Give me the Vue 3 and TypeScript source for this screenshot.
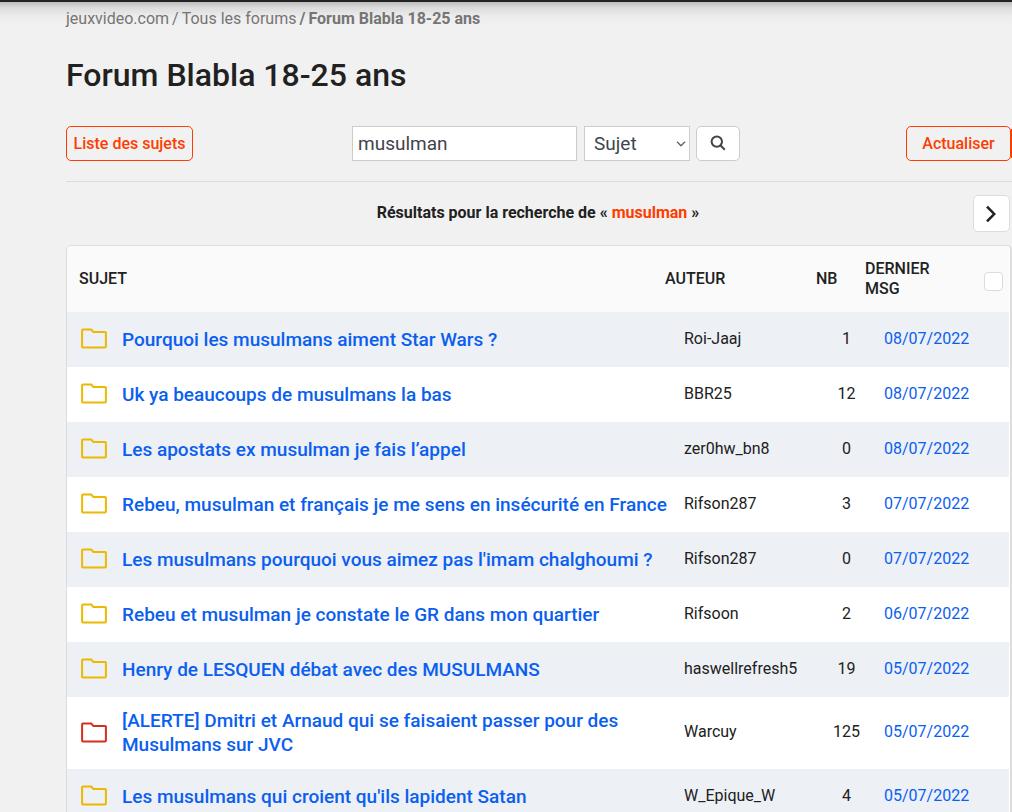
<script setup lang="ts">
import { ref } from 'vue'

interface Topic {
  title: string
  author: string
  count: number
  date: string
  hot?: boolean
}

const query = ref('musulman')
const searchIn = ref('Sujet')

const topics: Topic[] = [
  { title: 'Pourquoi les musulmans aiment Star Wars ?', author: 'Roi-Jaaj', count: 1, date: '08/07/2022' },
  { title: 'Uk ya beaucoups de musulmans la bas', author: 'BBR25', count: 12, date: '08/07/2022' },
  { title: 'Les apostats ex musulman je fais l’appel', author: 'zer0hw_bn8', count: 0, date: '08/07/2022' },
  { title: 'Rebeu, musulman et français je me sens en insécurité en France', author: 'Rifson287', count: 3, date: '07/07/2022' },
  { title: "Les musulmans pourquoi vous aimez pas l'imam chalghoumi ?", author: 'Rifson287', count: 0, date: '07/07/2022' },
  { title: 'Rebeu et musulman je constate le GR dans mon quartier', author: 'Rifsoon', count: 2, date: '06/07/2022' },
  { title: 'Henry de LESQUEN débat avec des MUSULMANS', author: 'haswellrefresh5', count: 19, date: '05/07/2022' },
  { title: '[ALERTE] Dmitri et Arnaud qui se faisaient passer pour des Musulmans sur JVC', author: 'Warcuy', count: 125, date: '05/07/2022', hot: true },
  { title: "Les musulmans qui croient qu'ils lapident Satan", author: 'W_Epique_W', count: 4, date: '05/07/2022' },
]
</script>

<template>
  <div class="page">
    <nav class="breadcrumb" aria-label="Fil d'Ariane">
      <a href="#">jeuxvideo.com</a><span class="sep">/</span><a href="#">Tous les forums</a><strong class="sep">/</strong><strong>Forum Blabla 18-25 ans</strong>
    </nav>

    <main class="content">
      <h1>Forum Blabla 18-25 ans</h1>

      <div class="toolbar">
        <button type="button" class="btn btn-list">Liste des sujets</button>
        <form class="search" @submit.prevent>
          <input v-model="query" type="text" class="field query" aria-label="Recherche" />
          <span class="select-wrap">
            <select v-model="searchIn" class="field scope" aria-label="Rechercher dans">
              <option>Sujet</option>
              <option>Auteur</option>
            </select>
            <svg class="caret" viewBox="0 0 10 6" aria-hidden="true"><path d="M1 .8l4 4 4-4" /></svg>
          </span>
          <button type="submit" class="submit" aria-label="Rechercher">
            <svg viewBox="0 0 16 16" aria-hidden="true">
              <circle cx="6.8" cy="6.6" r="5.2" /><path d="M10.6 10.5l4.2 4.2" />
            </svg>
          </button>
        </form>
        <div class="actions">
          <button type="button" class="btn btn-refresh">Actualiser</button>
          <span class="next-edge"></span>
        </div>
      </div>

      <div class="results">
        <p>Résultats pour la recherche de « <span>musulman</span> »</p>
        <button type="button" class="next" aria-label="Page suivante">
          <svg viewBox="0 0 12 18" aria-hidden="true"><path d="M2 1.6l7.2 7.4L2 16.4" /></svg>
        </button>
      </div>

      <div class="panel">
        <table>
          <colgroup>
            <col /><col class="c-author" /><col class="c-count" /><col class="c-date" /><col class="c-check" />
          </colgroup>
          <thead>
            <tr>
              <th scope="col" class="h-subject">SUJET</th>
              <th scope="col">AUTEUR</th>
              <th scope="col">NB</th>
              <th scope="col">DERNIER<br />MSG</th>
              <th scope="col"><input type="checkbox" aria-label="Tout sélectionner" /></th>
            </tr>
          </thead>
          <tbody>
            <tr v-for="topic in topics" :key="topic.title">
              <td>
                <div class="subject">
                  <svg class="folder" :class="{ hot: topic.hot }" viewBox="0 0 26 21" aria-hidden="true">
                    <path d="M2 1.5h8.2l2.2 2.4H24a.9.9 0 0 1 .9.9v13.8a.9.9 0 0 1-.9.9H2a.9.9 0 0 1-.9-.9V2.4a.9.9 0 0 1 .9-.9z" />
                  </svg>
                  <a href="#">{{ topic.title }}</a>
                </div>
              </td>
              <td class="author">{{ topic.author }}</td>
              <td class="count">{{ topic.count }}</td>
              <td class="date"><a href="#">{{ topic.date }}</a></td>
              <td></td>
            </tr>
          </tbody>
        </table>
      </div>
    </main>
  </div>
</template>

<style>
body {
  background: #f1f1f1;
}
</style>

<style scoped>
.page {
  box-sizing: border-box;
  border-top: 2px solid #222;
  background: linear-gradient(#bdbdbd, #dcdcdc 6px, #ececec 14px, #f1f1f1 24px);
  font-family: Roboto, "Liberation Sans", sans-serif;
  font-size: 16px;
  line-height: 20px;
  color: #212121;
}

a {
  color: inherit;
  text-decoration: none;
}

button,
input,
select {
  box-sizing: border-box;
  margin: 0;
  font: inherit;
}

.breadcrumb {
  padding: 7px 0 0 66px;
  color: #757575;
}

.sep {
  margin: 0 3px;
}

.content {
  padding-left: 66px;
}

h1 {
  margin: 26px 0 31px;
  font-size: 32px;
  line-height: 40px;
  font-weight: 500;
}

.toolbar {
  display: flex;
  justify-content: space-between;
  align-items: center;
  padding-bottom: 20px;
  border-bottom: 1px solid #dcdcdc;
}

.btn {
  height: 35px;
  border: 1px solid #ff3c00;
  border-radius: 5px;
  background: transparent;
  color: #ff3c00;
  font-weight: 500;
}

.btn-list {
  width: 127px;
  padding: 0;
}

.btn-refresh {
  width: 105px;
  padding: 0;
}

.search {
  display: flex;
  margin-right: 7px;
}

.field {
  height: 35px;
  border: 1px solid #ccc;
  border-radius: 0;
  background: #fff;
  color: #40444b;
  font-size: 19px;
}

.query {
  width: 225px;
  margin-right: 7px;
  padding: 0 5px;
}

.select-wrap {
  position: relative;
  margin-right: 6px;
}

.scope {
  width: 106px;
  padding: 0 9px;
  appearance: none;
}

.caret {
  position: absolute;
  right: 4px;
  top: 15px;
  width: 10px;
  height: 6px;
  fill: none;
  stroke: #666;
  stroke-width: 1.4;
  pointer-events: none;
}

.submit {
  display: flex;
  align-items: center;
  justify-content: center;
  width: 44px;
  height: 35px;
  padding: 0 0 2px;
  border: 1px solid #ccc;
  border-radius: 5px;
  background: #fff;
}

.submit svg {
  width: 16px;
  height: 16px;
  fill: none;
  stroke: #40444b;
  stroke-width: 2;
}

.actions {
  display: flex;
  align-items: center;
}

.next-edge {
  width: 1px;
  height: 29px;
  background: #ff3c00;
}

.results {
  display: grid;
  grid-template-columns: 37px 1fr 37px;
  padding: 13px 2px 13px 0;
}

.results p {
  grid-column: 2;
  margin: 8px 0 0;
  font-weight: 700;
  text-align: center;
}

.results span {
  color: #ff3c00;
}

.next {
  display: flex;
  align-items: center;
  justify-content: center;
  height: 37px;
  padding: 0 2px 0 0;
  border: 1px solid #dcdcdc;
  border-radius: 5px;
  background: #fff;
}

.next svg {
  width: 12px;
  height: 18px;
  fill: none;
  stroke: #212121;
  stroke-width: 2.5;
}

.panel {
  overflow: hidden;
  padding-right: 1px;
  border: 1px solid #dcdcdc;
  border-right-width: 2px;
  border-bottom: 0;
  border-radius: 5px 5px 0 0;
  background: #fff;
}

table {
  width: 100%;
  table-layout: fixed;
  border-collapse: collapse;
}

.c-author {
  width: 151px;
}

.c-count {
  width: 49px;
}

.c-date {
  width: 119px;
}

.c-check {
  width: 25px;
}

th {
  height: 66px;
  padding: 0;
  background: #fafafa;
  font-weight: 500;
  text-align: left;
}

.h-subject {
  padding-left: 12px;
}

th input {
  display: block;
  width: 19px;
  height: 19px;
  margin-top: 5px;
  appearance: none;
  border: 1px solid #dcdcdc;
  border-radius: 4px;
  background: #fff;
}

td {
  box-sizing: border-box;
  height: 55px;
  padding: 0 0 2px;
}

tbody tr:nth-child(odd) {
  background: #edf0f5;
}

.subject {
  display: flex;
  align-items: center;
  margin-right: -8px;
  padding: 12px 0 10px;
  color: #0b5ff0;
  font-size: 19px;
  line-height: 24px;
  font-weight: 500;
}

.folder {
  flex: none;
  width: 26px;
  height: 21px;
  margin: 0 15px 2px 14px;
  fill: none;
  stroke: #ecb800;
  stroke-width: 2;
}

.folder.hot {
  stroke: #d32f1e;
}

.author {
  padding-left: 19px;
}

.count {
  padding-left: 12px;
  text-align: center;
}

.date {
  padding-left: 19px;
  color: #0b5ff0;
}
</style>
